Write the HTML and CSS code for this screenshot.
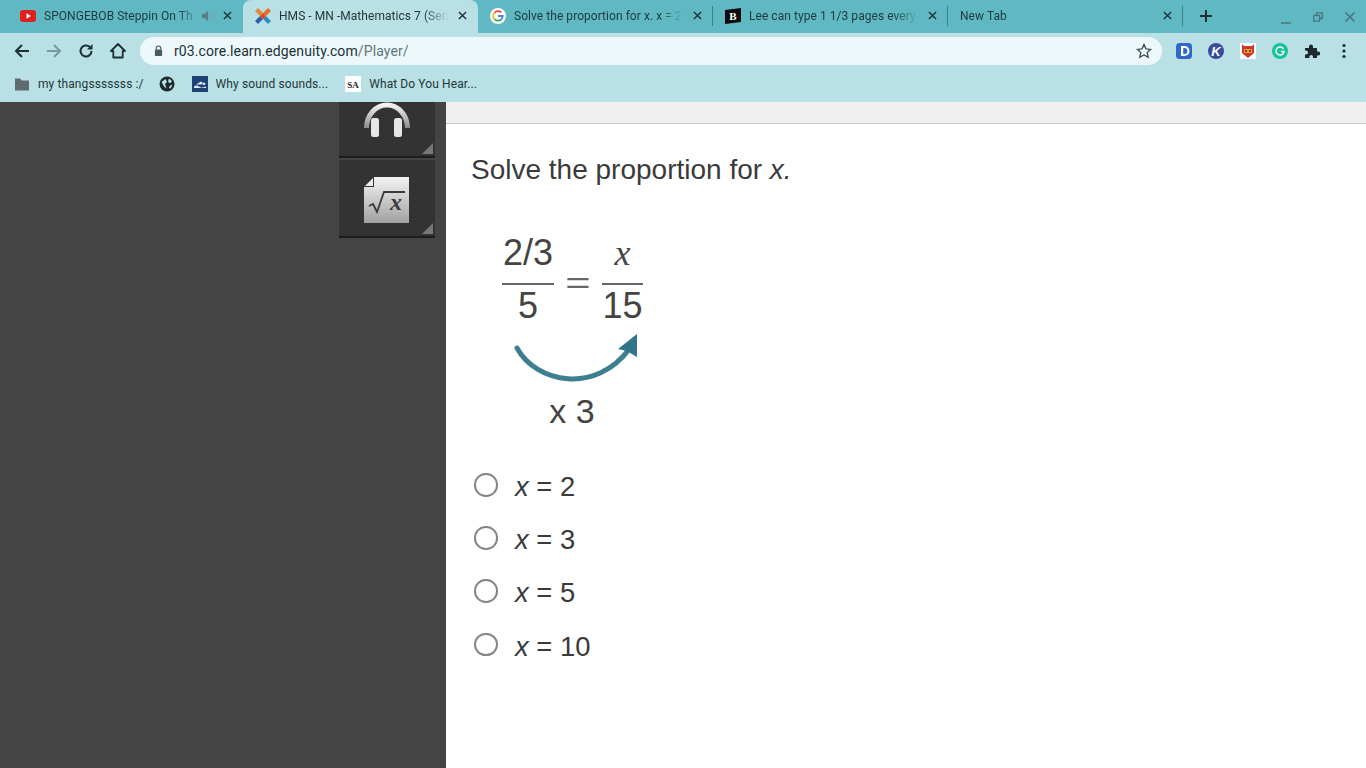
FILE: index.html
```html
<!DOCTYPE html>
<html lang="en">
<head>
    <meta charset="UTF-8">
    <title>HMS - MN -Mathematics 7</title>
    <link rel="stylesheet" href="styles.css">
</head>
<body>

<!-- Browser tabs -->
<div class="tabstrip">
    <div class="tab">
        <svg class="favicon" viewBox="0 0 16 16"><rect x="0" y="2" width="16" height="12" rx="3" fill="#e0201c"/><path d="M6.500 5.200v5.600L11 8z" fill="#fff"/></svg>
        <span class="tab-title">SPONGEBOB Steppin On Th</span>
        <svg class="tab-sound" viewBox="0 0 14 12"><path d="M1 4h2.500L7 1v10L3.500 8H1z" fill="#54808a"/><path d="M9 3.500v5M11.500 2.500v7" stroke="#7ba7ae" stroke-width="1.300"/></svg>
        <svg class="tab-close" viewBox="0 0 10 10"><path d="M1 1l8 8M9 1l-8 8"/></svg>
    </div>
    <div class="tab active">
        <svg class="favicon" viewBox="0 0 16 16"><path d="M0 13L7 6l3 3-7 7z" fill="#2d5fa8"/><path d="M16 13L9 6 6 9l7 7z" fill="#2f8fc4"/><path d="M0 3l8 8 3-3-8-8z" fill="#e08a3c"/><path d="M16 3L8 11 5 8l8-8z" fill="#e8702a"/><path d="M8 6l2.500 2.500L8 11 5.500 8.500z" fill="#d8452a"/></svg>
        <span class="tab-title">HMS - MN -Mathematics 7 (Sem</span>
        <svg class="tab-close" viewBox="0 0 10 10"><path d="M1 1l8 8M9 1l-8 8"/></svg>
    </div>
    <div class="tab">
        <svg class="favicon" viewBox="0 0 16 16"><circle cx="8" cy="8" r="8" fill="#fff"/><path d="M4.600 4.700a4.800 4.800 0 0 1 6.600-.3" fill="none" stroke="#ea4335" stroke-width="1.800"/><path d="M4.600 4.700a4.800 4.800 0 0 0 0 6.600" fill="none" stroke="#fbbc05" stroke-width="1.800"/><path d="M4.600 11.300a4.800 4.800 0 0 0 6.800 0" fill="none" stroke="#34a853" stroke-width="1.800"/><path d="M11.400 11.300a4.800 4.800 0 0 0 1.300-3.300H8" fill="none" stroke="#4285f4" stroke-width="1.800"/></svg>
        <span class="tab-title">Solve the proportion for x. x = 2</span>
        <svg class="tab-close" viewBox="0 0 10 10"><path d="M1 1l8 8M9 1l-8 8"/></svg>
    </div>
    <div class="tab">
        <svg class="favicon" viewBox="0 0 16 16"><path d="M0 2l16-2v14L0 16z" fill="#0c0c0c"/><text x="8" y="12" text-anchor="middle" class="brainly">B</text></svg>
        <span class="tab-title">Lee can type 1 1/3 pages every</span>
        <svg class="tab-close" viewBox="0 0 10 10"><path d="M1 1l8 8M9 1l-8 8"/></svg>
    </div>
    <div class="tab">
        <span class="tab-title">New Tab</span>
        <svg class="tab-close" viewBox="0 0 10 10"><path d="M1 1l8 8M9 1l-8 8"/></svg>
    </div>
    <svg class="new-tab" viewBox="0 0 12 12"><path d="M6 0v12M0 6h12"/></svg>
    <div class="window-controls">
        <svg viewBox="0 0 10 10"><path d="M0 9h10" stroke-width="1.500"/></svg>
        <svg viewBox="0 0 10 10"><path d="M3.500 3V.8h5.700v5.700H7" stroke-width="1.300"/><rect x=".8" y="3.500" width="5.700" height="5.700" stroke-width="1.300"/></svg>
        <svg viewBox="0 0 10 10"><path d="M.5.500l9 9M9.500.5l-9 9" stroke-width="1.500"/></svg>
    </div>
</div>

<!-- Toolbar -->
<div class="toolbar">
    <svg class="tool-btn" viewBox="0 0 16 16"><path d="M15 8H2M8 2L2 8l6 6" fill="none" stroke="#1d3035" stroke-width="2"/></svg>
    <svg class="tool-btn" viewBox="0 0 16 16"><path d="M1 8h13M8 2l6 6-6 6" fill="none" stroke="#7b989e" stroke-width="2"/></svg>
    <svg class="tool-btn" viewBox="0 0 16 16"><path d="M13.500 8a5.500 5.500 0 1 1-1.700-4" fill="none" stroke="#1d3035" stroke-width="2"/><path d="M14.500 1v5.500H9z" fill="#1d3035"/></svg>
    <svg class="tool-btn" viewBox="0 0 16 16"><path d="M8 1L1 8h2.300v6.500h9.400V8H15z" fill="none" stroke="#1d3035" stroke-width="1.800" stroke-linejoin="round"/></svg>
    <div class="omnibox">
        <svg class="lock" viewBox="0 0 10 12"><path d="M2.500 5V3.500a2.500 2.500 0 0 1 5 0V5" fill="none" stroke="#4a5a5e" stroke-width="1.300"/><rect x="1" y="5" width="8" height="7" rx="1" fill="#4a5a5e"/></svg>
        <span class="url">r03.core.learn.edgenuity.com<span class="url-path">/Player/</span></span>
        <svg class="star" viewBox="0 0 16 16"><path d="M8 1.500l2 4.400 4.700.5-3.500 3.200 1 4.700L8 11.900l-4.200 2.400 1-4.700L1.300 6.400 6 5.900z" fill="none" stroke="#384a4e" stroke-width="1.300"/></svg>
    </div>
    <div class="extensions">
        <svg viewBox="0 0 16 16"><rect width="16" height="16" rx="3.500" fill="#2f68c9"/><path d="M5 3h3.500a5 5 0 0 1 0 10H5zM7.200 5v6h1.200a3 3 0 0 0 0-6z" fill="#fff" fill-rule="evenodd"/></svg>
        <svg viewBox="0 0 16 16"><circle cx="8" cy="8" r="8" fill="#3a4a9c"/><text x="8" y="12.500" text-anchor="middle" class="ext-letter">K</text></svg>
        <svg viewBox="0 0 16 16"><rect width="16" height="16" fill="#fff"/><path d="M2 1l2 2h8l2-2v9l-6 5-6-5z" fill="#c9372c"/><rect x="4" y="6" width="8" height="4" fill="#e8a23a"/><path d="M5 8h2M9 8h2" stroke="#6a1c14" stroke-width="1.500"/></svg>
        <svg viewBox="0 0 16 16"><circle cx="8" cy="8" r="8" fill="#15c39a"/><path d="M11.500 6A4 4 0 1 0 12 8.500H9" fill="none" stroke="#fff" stroke-width="1.500"/></svg>
        <svg viewBox="0 0 16 16"><path d="M1 5h4V3.500a2 2 0 0 1 4 0V5h4v3.500h1.200a2 2 0 0 1 0 4H13V15H9v-1.300a1.800 1.800 0 0 0-3.600 0V15H1v-3.500h1a2 2 0 0 0 0-4H1z" fill="#1d2a2d"/></svg>
        <svg viewBox="0 0 16 16"><circle cx="8" cy="2.500" r="1.600" fill="#1d2a2d"/><circle cx="8" cy="8" r="1.600" fill="#1d2a2d"/><circle cx="8" cy="13.500" r="1.600" fill="#1d2a2d"/></svg>
    </div>
</div>

<!-- Bookmarks -->
<div class="bookmarks">
    <span class="bookmark">
        <svg viewBox="0 0 16 16"><path d="M1 2.500h5l2 2h7v10H1z" fill="#5f6b6e"/></svg>my thangsssssss :/
    </span>
    <span class="bookmark icon-only">
        <svg viewBox="0 0 16 16"><circle cx="8" cy="8" r="7.500" fill="#1d2a2d"/><path d="M2.500 6l4-3 1.500 3-2 2 1.500 4.500-2.500-2zM10 2.500l3 2.500-2 2.500-2-2zM11 9.500l2.500-.5-2 3.500-1.500-.5z" fill="#b8e0e5"/></svg>
    </span>
    <span class="bookmark">
        <svg viewBox="0 0 16 16"><rect width="16" height="16" fill="#1e4278"/><path d="M2 10.500c2-1.500 3-1.500 5 0s3 1.500 7 0V12H2zM4 8.500l5-3 2 1.500-1.500 1.500zM12 6.500a1.300 1.300 0 1 0 .01 0z" fill="#dfe9f2"/></svg>Why sound sounds...
    </span>
    <span class="bookmark">
        <svg viewBox="0 0 16 16"><rect width="16" height="16" fill="#fff"/><text x="8" y="12" text-anchor="middle" class="sa-mark">SA</text></svg>What Do You Hear...
    </span>
</div>

<!-- Lesson player -->
<div class="player">
    <aside class="sidebar">
        <div class="tools">
            <div class="tool tool-audio">
                <svg viewBox="0 0 48 40"><defs><linearGradient id="metal" x1="0" y1="0" x2="0" y2="1"><stop offset="0" stop-color="#f2f2f2"/><stop offset="1" stop-color="#8c8c8c"/></linearGradient></defs><path d="M3.500 26A20.500 23 0 0 1 44.500 26" fill="none" stroke="url(#metal)" stroke-width="5"/><rect x="8" y="16" width="8" height="19" rx="2.500" fill="#e6e6e6"/><rect x="31" y="16" width="8" height="19" rx="2.500" fill="#e6e6e6"/></svg>
            </div>
            <div class="tool">
                <svg class="calc" viewBox="0 0 45 46"><defs><linearGradient id="page" x1="0" y1="0" x2="0" y2="1"><stop offset="0" stop-color="#f4f4f4"/><stop offset="1" stop-color="#a0a0a0"/></linearGradient></defs><path d="M10 0h35v46H0V10h10z" fill="url(#page)"/><path d="M1 9l8-8v8z" fill="#eee"/><path d="M5 29l4-2 4 8 7-20h21" fill="none" stroke="#3b3b3b" stroke-width="1.800"/><text x="26" y="33" class="calc-x">x</text></svg>
            </div>
        </div>
    </aside>
    <main class="content">
        <div class="content-bar"></div>
        <div class="question">
            <h2 class="prompt">Solve the proportion for <em>x.</em></h2>
            <div class="figure">
                <div class="equation">
                    <div class="frac"><span class="num">2/3</span><span class="denom">5</span></div>
                    <span class="equals">=</span>
                    <div class="frac frac-x"><span class="num var">x</span><span class="denom">15</span></div>
                </div>
                <svg class="arrow" viewBox="0 0 130 50"><path d="M3 15C22 50 82 62 116 15" fill="none" stroke="#3d7f90" stroke-width="5" stroke-linecap="round"/><path d="M123 1L104 16 113 18 123 24z" fill="#2f7488"/></svg>
                <div class="times">x 3</div>
            </div>
            <ul class="answers">
                <li class="answer"><span class="radio"></span><span><em>x</em> = 2</span></li>
                <li class="answer"><span class="radio"></span><span><em>x</em> = 3</span></li>
                <li class="answer"><span class="radio"></span><span><em>x</em> = 5</span></li>
                <li class="answer"><span class="radio"></span><span><em>x</em> = 10</span></li>
            </ul>
        </div>
    </main>
</div>

</body>
</html>
```

FILE: styles.css
```css
/* Global Styles */
body {
    margin: 0;
    height: 768px;
    overflow: hidden;
    display: flex;
    flex-direction: column;
    font-family: Roboto, "Liberation Sans", sans-serif;
    background-color: #fff;
}

/* Tabs */
.tabstrip {
    height: 33px;
    flex: none;
    display: flex;
    align-items: stretch;
    padding-left: 8px;
    background-color: #5fb8c2;
}
.tab {
    width: 235px;
    box-sizing: border-box;
    flex: none;
    display: flex;
    align-items: center;
    padding: 0 11px 2px 12px;
    font-size: 12px;
    letter-spacing: .05px;
    color: #1d3a40;
    position: relative;
}
.tab::after {
    content: "";
    position: absolute;
    right: 0;
    top: 6px;
    height: 20px;
    width: 1px;
    background-color: #3f7f88;
}
.tab:nth-child(1)::after,
.tab.active::after {
    display: none;
}
.tab.active {
    background-color: #b8e0e5;
    border-radius: 8px 8px 0 0;
    color: #24373b;
}
.favicon {
    width: 16px;
    height: 16px;
    flex: none;
    margin-right: 8px;
}
.tab-title {
    flex: 1;
    min-width: 0;
    white-space: nowrap;
    -webkit-mask-image: linear-gradient(to left, transparent, #000 24px);
    mask-image: linear-gradient(to left, transparent, #000 24px);
}
.tab-sound {
    width: 14px;
    height: 12px;
    margin-right: 4px;
    flex: none;
}
.tab-close {
    width: 9px;
    height: 9px;
    flex: none;
    margin-left: 10px;
}
.tab-sound + .tab-close {
    margin-left: 4px;
}
.tab-close path {
    stroke: #1d3035;
    stroke-width: 1.500;
    fill: none;
}
.brainly {
    font: bold 11px "Liberation Serif", serif;
    fill: #fff;
}
.new-tab {
    width: 12px;
    height: 12px;
    flex: none;
    margin: 10px 0 0 17px;
}
.new-tab path {
    stroke: #1d3035;
    stroke-width: 2;
}
.window-controls {
    margin-left: auto;
    display: flex;
    gap: 22px;
    padding: 12px 11px 0 0;
}
.window-controls svg {
    width: 10px;
    height: 10px;
    fill: none;
    stroke: #467681;
}
.window-controls svg:first-child {
    margin-top: 2px;
}

/* Toolbar */
.toolbar {
    height: 35px;
    flex: none;
    display: flex;
    align-items: center;
    padding-left: 14px;
    background-color: #b8e0e5;
}
.tool-btn {
    width: 16px;
    height: 16px;
    flex: none;
    margin-right: 16px;
}
.omnibox {
    width: 1022px;
    height: 28px;
    box-sizing: border-box;
    margin-left: -2px;
    display: flex;
    align-items: center;
    padding: 0 10px 0 14px;
    border-radius: 14px;
    background-color: #ecf8f9;
    font-size: 14px;
    letter-spacing: .1px;
    color: #1d3035;
}
.lock {
    width: 9px;
    height: 11px;
    margin-right: 11px;
}
.url {
    flex: 1;
}
.url-path {
    color: #62757a;
}
.star {
    width: 16px;
    height: 16px;
}
.extensions {
    display: flex;
    gap: 16px;
    margin-left: 14px;
}
.extensions svg {
    width: 16px;
    height: 16px;
    display: block;
}
.ext-letter {
    font: italic bold 13px "Liberation Sans", sans-serif;
    fill: #fff;
}

/* Bookmarks */
.bookmarks {
    height: 34px;
    flex: none;
    display: flex;
    align-items: center;
    padding: 0 0 3px 14px;
    background-color: #b8e0e5;
    font-size: 12px;
    letter-spacing: .1px;
    color: #24373b;
    box-sizing: border-box;
}
.bookmark {
    display: flex;
    align-items: center;
    margin-right: 17px;
    white-space: nowrap;
}
.bookmark:first-child {
    margin-right: 15px;
}
.bookmark svg {
    width: 16px;
    height: 16px;
    margin-right: 8px;
}
.bookmark.icon-only svg {
    margin-right: 0;
}
.sa-mark {
    font: bold 9px "Liberation Serif", serif;
    fill: #222;
}

/* Lesson player */
.player {
    flex: 1;
    display: flex;
    min-height: 0;
}
.sidebar {
    width: 446px;
    flex: none;
    background-color: #444;
}
.tools {
    width: 96px;
    margin-left: 339px;
}
.tool {
    background-color: #333;
    border-bottom: 2px solid #1c1c1c;
    height: 76px;
    margin-bottom: 2px;
    display: flex;
    justify-content: center;
    align-items: center;
    position: relative;
}
.tool::after {
    content: "";
    position: absolute;
    right: 2px;
    bottom: 2px;
    border-style: solid;
    border-width: 0 0 11px 11px;
    border-color: transparent transparent #777 transparent;
}
.tool-audio {
    height: 54px;
    align-items: flex-start;
}
.tool-audio svg {
    width: 48px;
    height: 40px;
}
.calc {
    width: 45px;
    height: 46px;
    margin: 4px 2px 0 0;
}
.calc-x {
    font: italic bold 24px "Liberation Serif", serif;
    fill: #3b3b3b;
}
.content {
    flex: 1;
    min-width: 0;
    color: #3a3a3a;
}
.content-bar {
    height: 21px;
    background-color: #f0f0f0;
    border-bottom: 1px solid #c8c8c8;
}
.question {
    padding: 28px 0 0 25px;
    font-family: "Liberation Sans", Arial, sans-serif;
}
.prompt {
    margin: 0;
    font-size: 28px;
    line-height: 36px;
    font-weight: normal;
}
.figure {
    width: 150px;
    margin: 44px 0 0 31px;
    color: #444;
}
.equation {
    display: flex;
    align-items: center;
    gap: 11px;
}
.frac {
    display: flex;
    flex-direction: column;
    align-items: center;
    width: 52px;
    font-size: 36px;
    line-height: 42px;
}
.frac-x {
    width: 41px;
}
.num {
    margin-bottom: 9px;
}
.denom {
    border-top: 2px solid #666;
    align-self: stretch;
    text-align: center;
    white-space: nowrap;
}
.var {
    font-family: "Liberation Serif", serif;
    font-style: italic;
}
.equals {
    width: 26px;
    margin-top: 6px;
    text-align: center;
    font-size: 30px;
    line-height: 30px;
    color: #666;
    transform: scaleX(1.450);
}
.arrow {
    display: block;
    width: 130px;
    height: 50px;
    margin: 6px 0 0 12px;
}
.times {
    width: 140px;
    text-align: center;
    font-size: 34px;
    line-height: 42px;
    margin-top: 7px;
}
.answers {
    list-style: none;
    margin: 37px 0 0 3px;
    padding: 0;
}
.answer {
    height: 53.200px;
    display: flex;
    align-items: flex-start;
    font-size: 27.400px;
    line-height: 36px;
}
.radio {
    width: 19.500px;
    height: 19.500px;
    border: 2px solid #858585;
    border-radius: 50%;
    margin: 4px 17.500px 0 0;
    flex: none;
}
```
